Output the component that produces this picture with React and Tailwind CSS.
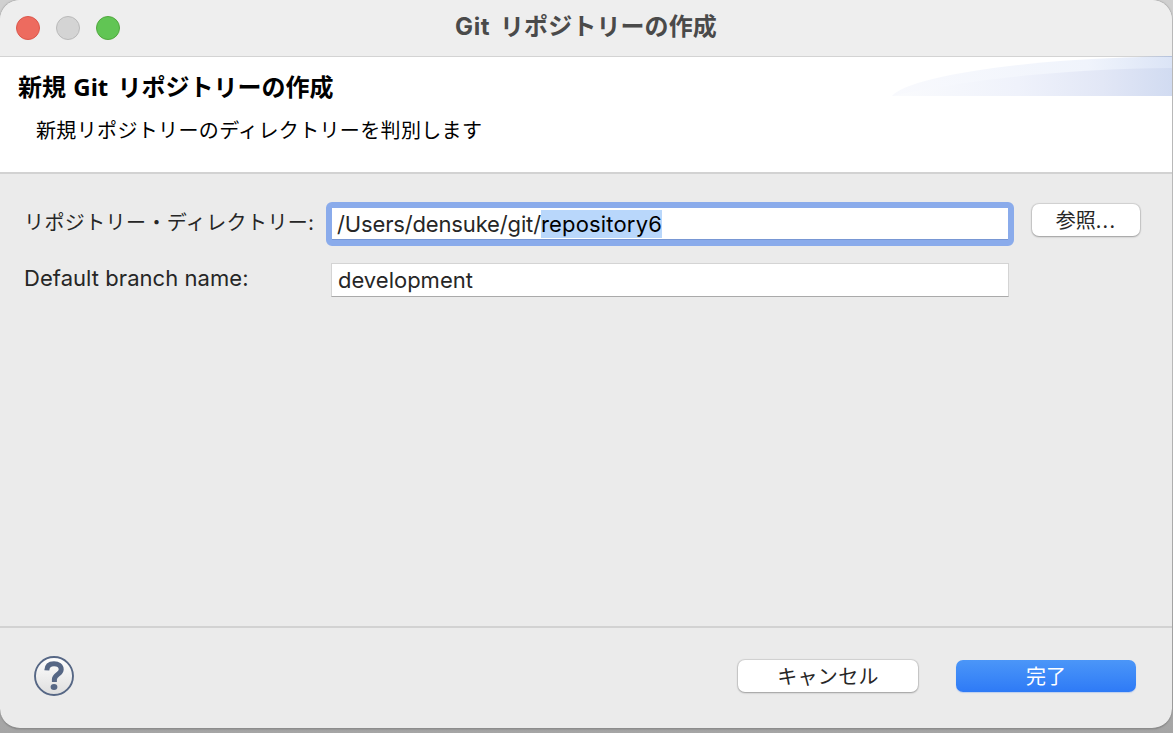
const uiFont = "font-['Inter','Noto_Sans_CJK_JP',sans-serif]";
const jpFont = "font-['Noto_Sans_CJK_JP',sans-serif]";

function TitleBar() {
  return (
    <header className="relative flex h-[57px] shrink-0 items-center border-b border-[#d3d3d3] bg-[#eeeeee] pl-4">
      <div className="flex gap-4">
        <span className="size-6 rounded-full border border-[#db574c] bg-[#ed6b5f]" />
        <span className="size-6 rounded-full border border-[#b9b9b9] bg-[#d4d4d4]" />
        <span className="size-6 rounded-full border border-[#51a73e] bg-[#61c554]" />
      </div>
      <h1 className={`${uiFont} absolute inset-x-0 top-[9px] text-center text-2xl leading-9 font-bold tracking-[0.1px] text-[#4a4a4a]`}>
        <span className="mr-[4px] tracking-[0.6px]">Git</span> リポジトリーの作成
      </h1>
    </header>
  );
}

function Swoosh() {
  return (
    <svg className="absolute top-[-1px] right-0 h-10 w-[280px]" viewBox="0 0 280 40" preserveAspectRatio="none">
      <defs>
        <linearGradient id="upper" x1="0" x2="1">
          <stop offset="0" stopColor="#f8f9fd" />
          <stop offset="0.7" stopColor="#f0f4fc" />
          <stop offset="1" stopColor="#dbe4f6" />
        </linearGradient>
        <linearGradient id="lower" x1="0" x2="1">
          <stop offset="0" stopColor="#fafbfd" />
          <stop offset="0.45" stopColor="#eff2fb" />
          <stop offset="0.75" stopColor="#e2e7f6" />
          <stop offset="1" stopColor="#d1dbf1" />
        </linearGradient>
        <linearGradient id="edge" x1="0" x2="1">
          <stop offset="0" stopColor="#d3d3d3" />
          <stop offset="1" stopColor="#b3c2df" />
        </linearGradient>
      </defs>
      <path d="M0 40C14 22 120 4 250 1H280V40Z" fill="url(#upper)" />
      <path d="M0 40C50 28 165 12 280 12V40Z" fill="url(#lower)" />
      <path d="M245 0H280V1H245Z" fill="url(#edge)" />
    </svg>
  );
}

function Banner() {
  return (
    <section className="relative h-[117px] shrink-0 border-b-2 border-[#d2d2d2] bg-white text-black">
      <Swoosh />
      <h2 className="relative pt-[12px] pl-[18px] font-['Noto_Sans','Noto_Sans_CJK_JP',sans-serif] text-2xl leading-9 font-bold whitespace-nowrap">
        新規 <span className="mr-[3px] ml-px">Git</span> リポジトリーの作成
      </h2>
      <p className={`${jpFont} relative mt-[10px] pl-[36px] text-xl leading-[30px] tracking-[0.35px] whitespace-nowrap`}>
        新規リポジトリーのディレクトリーを判別します
      </p>
    </section>
  );
}

function HelpIcon() {
  return (
    <svg className="size-10" viewBox="0 0 40 40">
      <defs>
        <linearGradient id="help" x1="0" x2="0" y1="0" y2="1">
          <stop offset="0" stopColor="#ffffff" />
          <stop offset="1" stopColor="#dedede" />
        </linearGradient>
      </defs>
      <circle cx="20" cy="20" r="19" fill="url(#help)" stroke="#566785" strokeWidth="1.9" />
      <path
        d="M12.8 14.4C13 9.8 16 7.8 20 7.8C24.3 7.8 27.2 9.8 27.2 13.4C27.2 18.4 20.4 18 20.4 23.4V26"
        fill="none"
        stroke="#566785"
        strokeWidth="5"
      />
      <ellipse cx="20" cy="31" rx="3.4" ry="3" fill="#566785" />
    </svg>
  );
}

export default function App() {
  return (
    <div className="h-[733px] w-[1173px] overflow-hidden bg-linear-to-b from-[#d0d0d0] from-50% to-[#a5a5a5] pr-px">
      <main className="flex h-[729px] w-[1172px] flex-col overflow-hidden rounded-[20px] border-b border-[#8c8c8c] bg-[#ebebeb] text-[#262626] shadow-[0_0_2px_#777]">
        <TitleBar />
        <Banner />
        <section className="grid flex-1 grid-cols-[302px_688px_110px] content-start pt-[28px] pl-6">
          <label className={`${jpFont} mt-[5px] h-[30px] text-xl leading-[30px] tracking-[0.4px] whitespace-nowrap`}>
            リポジトリー・ディレクトリー:
          </label>
          <div className={`${uiFont} flex h-11 items-center rounded-md border-[6px] border-[#8aabeb] bg-white pl-[5px] text-[22px] leading-7 shadow-[inset_0_-1px_#7897d4]`}>
            <span className="tracking-[-0.15px]">/Users/densuke/git/</span>
            <span className="block h-7 bg-[#b9d7fb] tracking-[0.18px] text-black">repository6</span>
          </div>
          <button className={`${jpFont} mt-[2px] ml-[18px] h-8 w-[108px] rounded-[7px] bg-white text-xl leading-8 shadow-[0_0_1px_1px_#0000001c,0_1px_2px_#00000040]`}>
            参照<span className="tracking-[1.2px]">...</span>
          </button>
          <label className={`${uiFont} mt-[18px] text-[22px] leading-7 tracking-[0.05px] whitespace-nowrap`}>Default branch name:</label>
          <div className={`${uiFont} mt-[17px] ml-[5px] flex h-[34px] w-[678px] items-center border border-[#d4d4d4] border-b-[#aaaaaa] bg-white pl-[6px] text-[22px] leading-7`}>
            development
          </div>
        </section>
        <footer className="flex h-[102px] shrink-0 items-center border-t-2 border-[#d2d2d2] pr-[36px] pb-[5px] pl-[34px]">
          <HelpIcon />
          <button className={`${jpFont} ml-auto h-8 w-[180px] rounded-[7px] bg-white text-xl leading-8 tracking-[0.3px] shadow-[0_0_1px_1px_#0000001c,0_1px_2px_#00000040]`}>
            キャンセル
          </button>
          <button className={`${jpFont} ml-[38px] h-8 w-[180px] rounded-[7px] bg-linear-to-b from-[#4b96f8] to-[#2e7af6] text-xl leading-8 text-white shadow-[0_1px_1px_#3478f640]`}>
            完了
          </button>
        </footer>
      </main>
    </div>
  );
}
